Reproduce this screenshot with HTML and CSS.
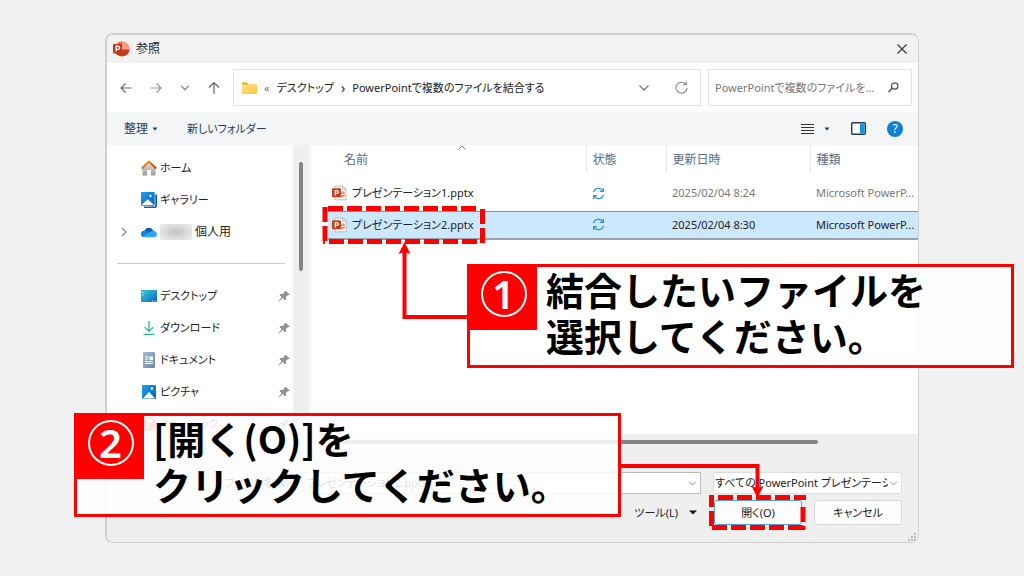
FILE: index.html
```html
<!DOCTYPE html>
<html lang="ja">
<head>
<meta charset="utf-8">
<title>参照</title>
<link rel="stylesheet" href="styles.css">
</head>
<body>
<svg width="0" height="0" class="defs" aria-hidden="true">
  <defs>
    <linearGradient id="gFolder" x1="0" y1="0" x2="1" y2="1"><stop offset="0" stop-color="#ffe08a"/><stop offset="1" stop-color="#fcc534"/></linearGradient>
    <linearGradient id="gBlue" x1="0" y1="0" x2="1" y2="1"><stop offset="0" stop-color="#1fa0ec"/><stop offset="1" stop-color="#0563b8"/></linearGradient>
    <linearGradient id="gDesk" x1="0" y1="0" x2="1" y2="1"><stop offset="0" stop-color="#35d0dc"/><stop offset="1" stop-color="#0c63bd"/></linearGradient>
    <linearGradient id="gRoof" x1="0" y1="0" x2="1" y2="1"><stop offset="0" stop-color="#f0a020"/><stop offset="1" stop-color="#c83c10"/></linearGradient>
    <linearGradient id="gWall" x1="0" y1="0" x2="0" y2="1"><stop offset="0" stop-color="#e2e2e2"/><stop offset="1" stop-color="#9c9c9c"/></linearGradient>
    <linearGradient id="gDoc" x1="0" y1="0" x2="1" y2="1"><stop offset="0" stop-color="#a6bbd2"/><stop offset="1" stop-color="#6b86a6"/></linearGradient>
    <symbol id="pin" viewBox="0 0 12 12"><path fill="#8b9298" d="M7.4.4 11.6 4.4 10.7 5.2 10 5 7.9 7.1 8 9.6 7 10.5 4.6 8.1 1 11.6.3 11.2 3.6 7.2 1.4 5 2.3 4.1 4.8 4.1 6.8 2 6.6 1.2z"/></symbol>
    <symbol id="pptx" viewBox="0 0 16 16"><path fill="#fff" stroke="#a5a5a5" stroke-width=".8" d="M3 .7h8.500l3.500 3v11.600H3z"/><path fill="none" stroke="#a5a5a5" stroke-width=".8" d="M11.300.8v3h3.500"/><path fill="#f0957d" d="M8 6.500h5.500v6H8z"/><path fill="#fff" d="M9.500 9h3v1h-3z"/><rect x="0" y="3" width="9.500" height="9.500" rx=".8" fill="#c43e1c"/><path fill="none" stroke="#fff" stroke-width="1.300" d="M3.500 10.700V5.500h1.700a1.500 1.500 0 0 1 0 3H3.500"/></symbol>
    <symbol id="sync" viewBox="0 0 14 14"><g fill="none" stroke="#2d8ee0" stroke-width="1.300"><path d="M1.700 5.600A5.300 5.300 0 0 1 11.600 4.400M12.300 8.400A5.300 5.300 0 0 1 2.400 9.600"/><path d="M12.200 1.200v3.600H8.600M1.800 12.800V9.200h3.600"/></g></symbol>
    <symbol id="chev" viewBox="0 0 12 12"><path fill="none" stroke="currentColor" stroke-width="1.300" d="M1.500 3.500 6 8l4.500-4.500"/></symbol>
  </defs>
</svg>

<main class="slide">
  <section class="dialog" aria-label="参照">
    <header class="titlebar">
      <svg width="17" height="16" viewBox="0 0 17 16"><circle cx="9" cy="8" r="7.6" fill="#ee6c4a"/><path fill="#ff9a7c" d="M9 .4A7.6 7.6 0 0 1 16.6 8H9z"/><path fill="#c9381b" d="M1.500 9h15a7.6 7.6 0 0 1-15 0z"/><rect x="0" y="3" width="9" height="9.4" rx="1" fill="#c33518"/><path fill="none" stroke="#fff" stroke-width="1.4" d="M3.200 10.500V5.200H5a1.600 1.600 0 0 1 0 3.200H3.200"/></svg>
      <h1 class="title">参照</h1>
      <button class="icon-btn" aria-label="閉じる"><svg width="10" height="10" viewBox="0 0 10 10"><path stroke="#333" stroke-width="1.100" d="m.5.5 9 9M9.500.5l-9 9"/></svg></button>
    </header>

    <nav class="navbar">
      <div class="history">
        <button class="icon-btn" aria-label="戻る"><svg width="12" height="12" viewBox="0 0 12 12"><path fill="none" stroke="#666" stroke-width="1.200" d="M11.500 6H1M5.500 1.500 1 6l4.500 4.500"/></svg></button>
        <button class="icon-btn" aria-label="進む"><svg width="12" height="12" viewBox="0 0 12 12"><path fill="none" stroke="#999" stroke-width="1.200" d="M.5 6H11M6.500 1.500 11 6l-4.500 4.500"/></svg></button>
        <button class="icon-btn dim" aria-label="履歴"><svg width="10" height="10"><use href="#chev"/></svg></button>
        <button class="icon-btn" aria-label="上へ"><svg width="12" height="14" viewBox="0 0 12 14"><path fill="none" stroke="#666" stroke-width="1.200" d="M6 13V1.500M1 6.500l5-5 5 5"/></svg></button>
      </div>
      <div class="address">
        <svg width="15" height="14" viewBox="0 0 15 14"><path fill="#e8a317" d="M0 1.500h5l1.500 2H14v4H0z"/><rect y="3.500" width="15" height="9.500" rx=".8" fill="url(#gFolder)"/></svg>
        <span class="crumb-more">«</span>
        <a class="crumb" href="#desktop">デスクトップ</a>
        <span class="crumb-sep">›</span>
        <a class="crumb" href="#folder">PowerPointで複数のファイルを結合する</a>
        <span class="address-tools">
          <button class="icon-btn dim" aria-label="以前の場所"><svg width="12" height="12"><use href="#chev"/></svg></button>
          <button class="icon-btn" aria-label="更新"><svg width="13" height="13" viewBox="0 0 13 13"><path fill="none" stroke="#888" stroke-width="1.100" d="M11 3.500A5.500 5.500 0 1 0 12 7M11.300.5v3.300H8"/></svg></button>
        </span>
      </div>
      <div class="search">
        <input type="text" aria-label="検索" placeholder="PowerPointで複数のファイルを...">
        <svg width="11" height="11" viewBox="0 0 11 11"><circle cx="6.700" cy="4" r="3.200" fill="none" stroke="#555" stroke-width="1.300"/><path stroke="#555" stroke-width="1.600" d="M4.300 6.300.6 10"/></svg>
      </div>
    </nav>

    <div class="toolbar">
      <button class="tool arrange">整理 <svg width="6" height="4" viewBox="0 0 6 4"><path fill="#1f3b63" d="M.5.5h5L3 3.500z"/></svg></button>
      <button class="tool">新しいフォルダー</button>
      <div class="view-tools">
        <button class="icon-btn" aria-label="表示方法"><svg width="13" height="12" viewBox="0 0 13 12"><path stroke="#333" stroke-width="1.200" d="M0 1.500h13M0 4.500h13M0 7.500h13M0 10.500h13"/></svg></button>
        <button class="icon-btn" aria-label="その他の表示"><svg width="6" height="4" viewBox="0 0 6 4"><path fill="#1f3b63" d="M.5.5h5L3 3.500z"/></svg></button>
        <button class="icon-btn pane" aria-label="プレビュー"><svg width="15" height="13" viewBox="0 0 15 13"><rect x=".7" y=".7" width="13.600" height="11.600" rx="1" fill="#fff" stroke="#23384f" stroke-width="1.400"/><path fill="#1496e4" d="M9 1.400h4.600v10.200H9z"/></svg></button>
        <button class="help" aria-label="ヘルプ">?</button>
      </div>
    </div>

    <div class="content">
      <aside class="sidebar">
        <ul class="places">
          <li><a class="place" href="#home"><svg width="16" height="16" viewBox="0 0 16 16"><path fill="url(#gWall)" d="M1.500 8 8 2l6.500 6v7.500H10V10H6v5.500H1.500z"/><path fill="none" stroke="url(#gRoof)" stroke-width="2" stroke-linejoin="round" d="M.8 8.500 8 1.500l7.200 7"/></svg>ホーム</a></li>
          <li><a class="place" href="#gallery"><svg width="16" height="16" viewBox="0 0 16 16"><path fill="#0a5cab" d="M14.300 2.500h1.700V14a2 2 0 0 1-2 2H3v-1.500h11.300z"/><rect width="13.700" height="13.700" rx="1" fill="url(#gBlue)"/><path fill="#fff" d="m.6 13 6.200-5.700 6.300 5.700z"/><circle cx="9.500" cy="4" r="1.200" fill="#fff"/></svg>ギャラリー</a></li>
          <li><a class="place" href="#onedrive"><svg class="expander" width="8" height="10" viewBox="0 0 8 10"><path fill="none" stroke="#888" stroke-width="1.200" d="m2 1 4 4-4 4"/></svg><svg width="16" height="12" viewBox="0 0 17 12"><path fill="#0b5cb8" d="M3.700 5A5 5 0 0 1 13 4.300L9 8 2 7z"/><path fill="#1484da" d="M0 8.300A3.500 3.500 0 0 1 5.500 5L12 9.500 3.500 11.500A3.400 3.400 0 0 1 0 8.300z"/><path fill="#2aa7ee" d="M1.500 10.800 10.500 5.500A4 4 0 0 1 17 8.300a3.300 3.300 0 0 1-3.300 3.200H3.500z"/></svg><span class="redacted"></span><span class="account">個人用</span></a></li>
          <li class="divider"></li>
          <li><a class="place" href="#desk"><svg width="16" height="16" viewBox="0 0 16 16"><rect y="2" width="16" height="12" rx=".8" fill="url(#gDesk)"/><path fill="#fff" d="M1.500 4h1v1h-1zM1.500 6.500h1v1h-1zM11 12.500h1v1h-1zM13.500 12.500h1v1h-1z"/></svg>デスクトップ<svg class="pin" width="12" height="12"><use href="#pin"/></svg></a></li>
          <li><a class="place" href="#down"><svg width="16" height="16" viewBox="0 0 16 16"><path fill="none" stroke="#2fb896" stroke-width="1.300" d="M8 1v10M3.800 7.200 8 11.400l4.200-4.200M2.500 14.300h11"/></svg>ダウンロード<svg class="pin" width="12" height="12"><use href="#pin"/></svg></a></li>
          <li><a class="place" href="#docs"><svg width="16" height="16" viewBox="0 0 16 16"><rect x="2" width="12" height="16" rx="1" fill="url(#gDoc)"/><path fill="#fff" d="M4 4.500h3.500v1H4zM4 6.500h3.500v1H4zM4 9h8v1H4zM4 11h8v1H4zM8.500 4.500H12v3.500H8.500z"/></svg>ドキュメント<svg class="pin" width="12" height="12"><use href="#pin"/></svg></a></li>
          <li><a class="place" href="#pics"><svg width="16" height="16" viewBox="0 0 16 16"><rect x="1" y="1" width="14" height="14" rx="1" fill="url(#gBlue)"/><path fill="#fff" d="m1.800 14.500 6.200-6.500 6.200 6.500z"/><circle cx="11" cy="4.500" r="1.200" fill="#fff"/></svg>ピクチャ<svg class="pin" width="12" height="12"><use href="#pin"/></svg></a></li>
          <li><a class="place" href="#music"><svg width="16" height="16" viewBox="0 0 16 16"><circle cx="8" cy="8" r="7.500" fill="#d9534a"/><path fill="none" stroke="#fff" stroke-width="1.500" d="M7 11V4l4 2"/><circle cx="6" cy="11" r="1.500" fill="#fff"/></svg>ミュージック<svg class="pin" width="12" height="12"><use href="#pin"/></svg></a></li>
        </ul>
        <div class="vscroll"><div class="vthumb"></div></div>
      </aside>
      <div class="files">
        <div class="file-area">
          <svg class="sort" width="8" height="5" viewBox="0 0 8 5"><path fill="none" stroke="#888" d="M.5 4.500 4 1l3.500 3.500"/></svg>
          <table class="file-table">
            <colgroup><col><col class="c-state"><col class="c-date"><col class="c-type"></colgroup>
            <thead><tr><th class="first">名前</th><th>状態</th><th>更新日時</th><th>種類</th></tr></thead>
            <tbody>
              <tr class="row"><td><span class="file"><svg width="15" height="16"><use href="#pptx"/></svg>プレゼンテーション1.pptx</span></td><td><svg class="sync" width="13" height="13"><use href="#sync"/></svg></td><td>2025/02/04 8:24</td><td>Microsoft PowerP...</td></tr>
              <tr class="row selected"><td><span class="file"><svg width="15" height="16"><use href="#pptx"/></svg>プレゼンテーション2.pptx</span></td><td><svg class="sync" width="13" height="13"><use href="#sync"/></svg></td><td>2025/02/04 8:30</td><td>Microsoft PowerP...</td></tr>
            </tbody>
          </table>
        </div>
        <div class="hscroll"><div class="hthumb"></div></div>
      </div>
    </div>

    <footer class="footer">
      <div class="fields">
        <label for="fname">ファイル名(N):</label>
        <div class="combo name-combo"><input id="fname" type="text" value="プレゼンテーション2.pptx"><svg width="9" height="9"><use href="#chev"/></svg></div>
        <div class="combo type-combo"><select aria-label="ファイルの種類"><option>すべての PowerPoint プレゼンテーシ</option></select><svg width="9" height="9"><use href="#chev"/></svg></div>
      </div>
      <div class="actions">
        <button class="tools-btn">ツール(L)<svg width="8" height="5" viewBox="0 0 8 5"><path fill="#111" d="M0 .5h8l-4 4z"/></svg></button>
        <button class="btn primary">開く(O)</button>
        <button class="btn">キャンセル</button>
      </div>
      <svg class="grip" width="9" height="9" viewBox="0 0 9 9"><path fill="#bbb" d="M6 0h2v2H6zM3 3h2v2H3zM6 3h2v2H6zM0 6h2v2H0zM3 6h2v2H3zM6 6h2v2H6z"/></svg>
    </footer>
  </section>

  <svg class="marks" width="1024" height="576" viewBox="0 0 1024 576" aria-hidden="true">
    <g fill="none" stroke="#fe0000">
      <path stroke-width="5" stroke-dasharray="15 4" d="M328 208.500H480"/>
      <path stroke-width="5" stroke-dasharray="15 4" d="M482.500 209V244"/>
      <path stroke-width="5" stroke-dasharray="15 4" d="M477 241.500H323"/>
      <path stroke-width="5" stroke-dasharray="15 4" d="M325 241V206"/>
      <path stroke-width="5" stroke-dasharray="15 4" d="M718 497.500H806"/>
      <path stroke-width="5" stroke-dasharray="15 4" d="M803 507V530"/>
      <path stroke-width="5" stroke-dasharray="15 4" d="M803 527.500H710"/>
      <path stroke-width="5" stroke-dasharray="15 4" d="M711.500 526V495"/>
      <path stroke-width="4" d="M468 317H404.500V250"/>
      <path stroke-width="4" d="M619 466H757.500V489"/>
    </g>
    <path fill="#fe0000" d="m404.500 242 6 12-6-2-6 2zM757.500 498l6-12-6 2-6-2z"/>
  </svg>

  <div class="callout callout-one">
    <div class="badge"><span class="number">1</span></div>
    <p class="message">結合したいファイルを<br>選択してください。</p>
  </div>
  <div class="callout callout-two">
    <div class="badge"><span class="number">2</span></div>
    <p class="message">[開く(O)]を<br>クリックしてください。</p>
  </div>
</main>
</body>
</html>
```
FILE: styles.css
```css
* { box-sizing: border-box; }

body {
  margin: 0;
  background: #f1f1f1;
  color: #222;
  font: 11px/16px "Noto Sans", "Noto Sans CJK JP", sans-serif;
  font-feature-settings: "palt";
}

button, input, select {
  margin: 0;
  padding: 0;
  border: 0;
  background: none;
  color: inherit;
  font: inherit;
  font-feature-settings: inherit;
}

a { color: inherit; text-decoration: none; }
svg { display: block; flex: none; }
.defs { position: absolute; }

.slide {
  position: relative;
  min-height: 100vh;
  padding: 33px 105px;
  overflow: hidden;
}

.dialog {
  border: 2px solid #d0d0d0;
  border-right-width: 1px;
  border-bottom-width: 1px;
  border-radius: 8px;
  background: #fff;
  overflow: hidden;
}

.icon-btn { display: flex; align-items: center; justify-content: center; }
.dim { color: #777; }

.titlebar {
  display: flex;
  align-items: center;
  gap: 6px;
  height: 28px;
  padding: 0 11px 0 6px;
  background: #f2f2f2;
}
.title { flex: 1; margin: 0; font-size: 12px; font-weight: 400; }

.navbar {
  display: flex;
  align-items: center;
  gap: 7px;
  height: 49px;
  padding: 0 6px 0 13px;
}
.history { display: flex; align-items: center; justify-content: space-between; width: 100px; margin-right: 6px; }
.address {
  flex: 1;
  display: flex;
  align-items: center;
  gap: 7px;
  height: 37px;
  padding: 0 12px 0 8px;
  border: 1px solid #e4e4e4;
  white-space: nowrap;
}
.crumb-more { color: #777; }
.crumb-sep { font-size: 14px; }
.address-tools { display: flex; gap: 25px; margin-left: auto; }
.search {
  display: flex;
  align-items: center;
  width: 204px;
  height: 37px;
  padding: 0 12px 0 6px;
  border: 1px solid #e4e4e4;
}
.search input { flex: 1; min-width: 0; }
.search input::placeholder { color: #777; opacity: 1; }

.toolbar {
  display: flex;
  align-items: center;
  gap: 29px;
  height: 33px;
  padding: 0 15px 0 17px;
  background: #f4f5f7;
  color: #1f3b63;
}
.tool { display: flex; align-items: center; gap: 4px; }
.arrange { font-size: 12px; }
.view-tools { display: flex; align-items: center; gap: 10px; margin-left: auto; }
.pane { margin: 0 11px; }
.help {
  width: 16px;
  height: 16px;
  border-radius: 50%;
  background: #0e7fd8;
  color: #fff;
  font-size: 12px;
  line-height: 16px;
}

.content { display: flex; height: 305px; }
.sidebar { display: flex; width: 205px; }
.places { flex: 1; margin: 0; padding: 7px 0 0; list-style: none; overflow: hidden; }
.place {
  position: relative;
  display: flex;
  align-items: center;
  gap: 3px;
  height: 32px;
  padding: 0 3px 0 34px;
}
.account { font-size: 12px; }
.expander { position: absolute; left: 13px; }
.redacted {
  width: 32px;
  height: 16px;
  background: radial-gradient(#c4c4c4, #efefef);
}
.divider { height: 32px; padding: 15px 8px 0 10px; }
.divider::before { content: ""; display: block; border-top: 1px solid #ccc; }
.pin { margin-left: auto; }
.vscroll { width: 19px; padding: 17px 0 0 6px; border-right: 3px solid #fafafa; background: #efefef; }
.vthumb { width: 4px; height: 109px; border-radius: 2px; background: #848484; }

.files { flex: 1; min-width: 0; display: flex; flex-direction: column; }
.file-area { position: relative; flex: 1; padding-left: 16px; }
.sort { position: absolute; left: 146px; top: 0; }
.file-table { width: 100%; border-collapse: collapse; table-layout: fixed; }
.c-state { width: 80px; }
.c-date { width: 144px; }
.c-type { width: 108px; }
.file-table th {
  height: 28px;
  padding: 1px 0 0 6px;
  border-left: 1px solid #e6e6e6;
  color: #5c6b82;
  font-size: 12px;
  font-weight: 400;
  text-align: left;
}
.file-table th.first { padding-left: 16px; border-left: 0; }
.file-table td { padding: 0 0 0 6px; white-space: nowrap; }
.file-table td:first-child { padding-left: 4px; }
.row { color: #777; }
.row td { height: 38px; padding-top: 3px; }
.file { display: flex; align-items: center; gap: 5px; color: #222; }
.row.selected { color: #222; }
.row.selected td {
  height: 28px;
  padding-top: 0;
  border-top: 1px solid #87939a;
  border-bottom: 2px solid #9ba1a5;
  background: #cce8ff;
}
.hscroll { height: 16px; padding: 6px 0 0 16px; background: #efefef; }
.hthumb { width: 490px; height: 4px; border-radius: 2px; background: #848484; }

.footer {
  position: relative;
  padding: 22px 16px 17px;
  background: #efefef;
}
.fields { display: flex; align-items: center; justify-content: flex-end; gap: 12px; height: 22px; }
.combo {
  display: flex;
  align-items: center;
  gap: 1px;
  height: 22px;
  padding: 0 3px 0 1px;
  border: 1px solid #ddd;
  background: #fff;
  color: #888;
}
.combo input, .combo select { flex: 1; min-width: 0; color: #222; }
.combo select { appearance: none; }
.name-combo { width: 397px; border-color: #bbb; }
.type-combo { width: 189px; border-radius: 2px; }
.actions { display: flex; align-items: center; justify-content: flex-end; gap: 12px; margin-top: 6px; }
.tools-btn { display: flex; align-items: center; gap: 11px; margin-right: 5px; }
.btn { width: 88px; height: 25px; border: 1px solid #d8d8d8; border-radius: 3px; background: #fdfdfd; }
.primary { border-color: #4d9fe0; }
.grip { position: absolute; right: 1px; bottom: 0; }

.marks { position: absolute; left: 0; top: 0; }

.callout {
  position: absolute;
  display: flex;
  width: 547px;
  height: 104px;
  border: 3px solid #fe0000;
  background: rgba(255, 255, 255, .86);
  color: #000;
}
.callout-one { left: 467px; top: 264px; }
.callout-two { left: 74px; top: 413px; }
.badge {
  display: flex;
  justify-content: center;
  width: 67px;
  height: 63px;
  padding-top: 4px;
  background: #fe0000;
}
.number {
  width: 46px;
  height: 46px;
  border: 2px solid #fff;
  border-radius: 50%;
  color: #fff;
  font-size: 40px;
  font-weight: 600;
  line-height: 42px;
  text-align: center;
}
.message {
  margin: -1px 0 0;
  padding-left: 9px;
  font-family: "Noto Sans CJK JP", sans-serif;
  font-size: 38px;
  font-weight: 700;
  line-height: 46px;
  font-feature-settings: normal;
  white-space: nowrap;
}
```
